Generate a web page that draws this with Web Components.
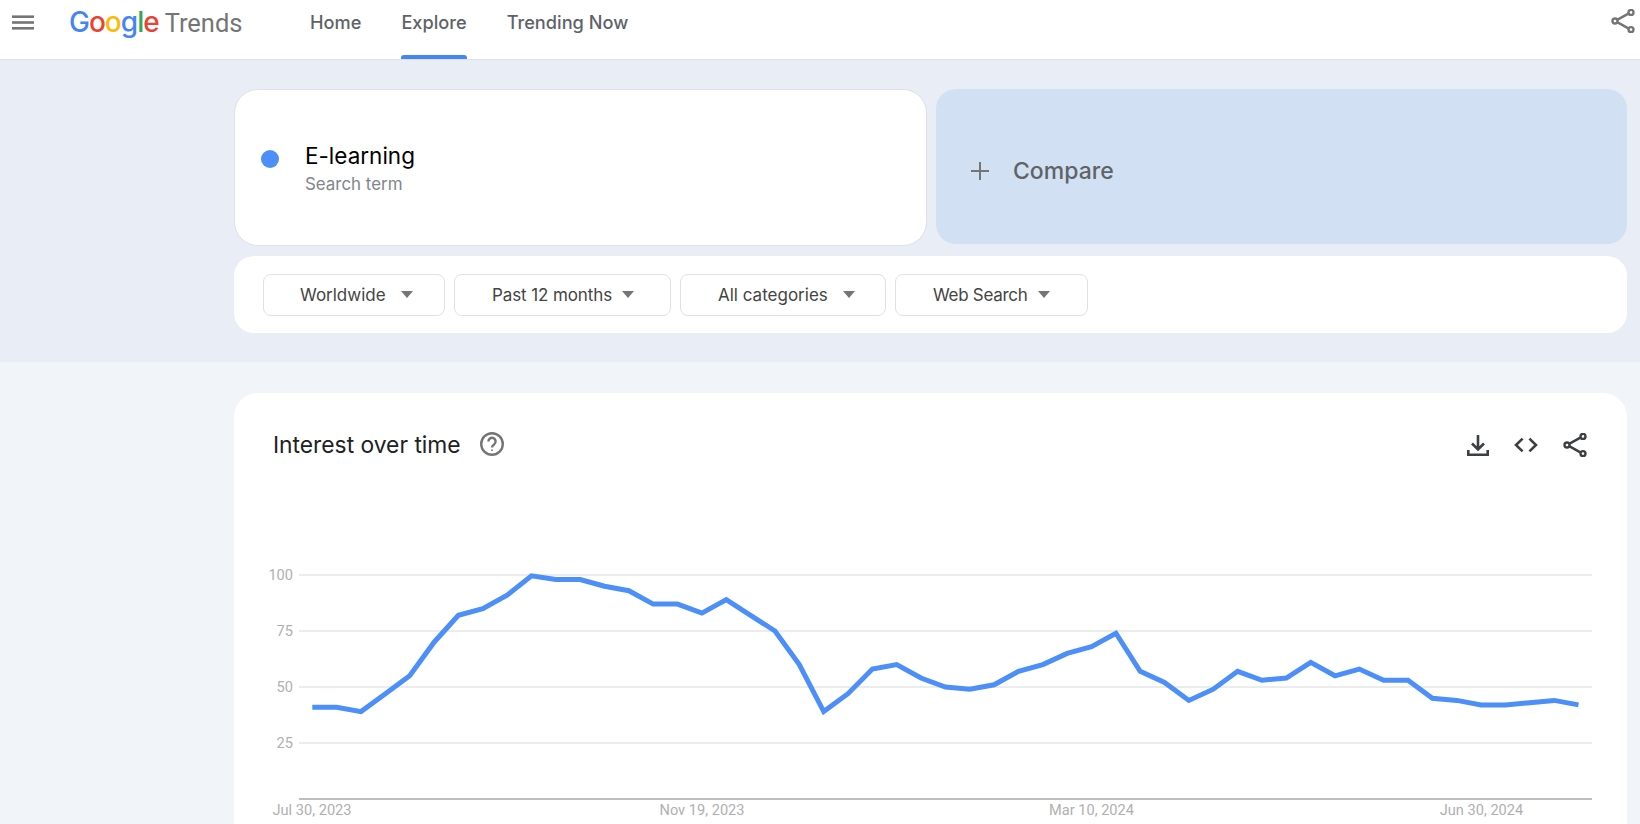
<!DOCTYPE html>
<html lang="en">
<head>
<meta charset="utf-8">
<title>Google Trends</title>
<style>
    html, body {
        margin: 0;
        height: 824px;
        overflow: hidden;
        background: #f1f4f9;
        font-family: Inter, "Liberation Sans", sans-serif;
    }
</style>
</head>
<body>
<trends-header></trends-header>
<explore-panel>
    <search-term slot="term" name="E-learning" kind="Search term"></search-term>
    <compare-box slot="compare"></compare-box>
    <filter-button slot="filters" style="width:182px;--pad:36px;--gap:15px">Worldwide</filter-button>
    <filter-button slot="filters" style="width:217px;--pad:37px;--gap:10px;letter-spacing:-0.1px">Past 12 months</filter-button>
    <filter-button slot="filters" style="width:206px;--pad:37px;--gap:15px">All categories</filter-button>
    <filter-button slot="filters" style="width:193px;--pad:37px;--gap:11px;letter-spacing:-0.3px">Web Search</filter-button>
</explore-panel>
<interest-card heading="Interest over time"></interest-card>

<script>
const shareIcon = (size, color, stroke) => `
<svg width="${size}" height="${size}" viewBox="0 0 24 24" fill="none" stroke="${color}" stroke-width="${stroke}">
    <path d="M6.6 10.6 17.4 4.6M6.6 13.4 17.4 19.4"/>
    <circle cx="4" cy="12" r="2.5"/>
    <circle cx="20" cy="3.4" r="2.5"/>
    <circle cx="20" cy="20.6" r="2.5"/>
</svg>`;

const headerTpl = document.createElement('template');
headerTpl.innerHTML = `
<style>
    :host {
        display: flex;
        align-items: flex-start;
        box-sizing: border-box;
        height: 60px;
        background: #fff;
        border-bottom: 1px solid #dfe1e5;
        position: relative;
    }

    .menu {
        display: block;
        margin: 15px 0 0 12px;
    }

    .logo {
        margin: 2px 0 0 35px;
        width: 241px;
        display: flex;
        align-items: baseline;
        height: 40px;
        line-height: 40px;
        white-space: nowrap;
    }

    .google {
        font: 500 28px/40px Inter, sans-serif;
        letter-spacing: -1px;
    }

    .b { color: #4285f4; }
    .r { color: #ea4335; }
    .y { color: #fbbc05; }
    .g { color: #34a853; }

    .trends {
        font: 400 25.5px/40px Roboto, sans-serif;
        color: #757575;
        margin-left: 6px;
    }

    nav {
        display: flex;
        gap: 40px;
        height: 59px;
    }

    nav a {
        display: block;
        position: relative;
        height: 59px;
        line-height: 44px;
        font-size: 18.2px;
        font-weight: 500;
        color: #5f6368;
    }

    nav a.on::after {
        content: '';
        position: absolute;
        left: 0;
        right: 0;
        bottom: 0;
        height: 4px;
        background: #4285f4;
        border-radius: 3px 3px 0 0;
    }

    .share {
        margin: 9px 5px 0 auto;
    }
</style>

<svg class="menu" width="22" height="15" viewBox="0 0 22 15" fill="#757575">
    <rect width="22" height="2.6" y="0.4"/>
    <rect width="22" height="2.6" y="6.2"/>
    <rect width="22" height="2.6" y="12"/>
</svg>
<div class="logo">
    <span class="google"><span class="b">G</span><span class="r">o</span><span class="y">o</span><span class="b">g</span><span class="g">l</span><span class="r">e</span></span>
    <span class="trends">Trends</span>
</div>
<nav>
    <a>Home</a>
    <a class="on">Explore</a>
    <a>Trending Now</a>
</nav>
<div class="share">${shareIcon(24, '#757575', 2.4)}</div>
`;

class TrendsHeaderElement extends HTMLElement {
    constructor() {
        super();
        this.attachShadow({ mode: 'open' });
        this.shadowRoot.append(headerTpl.content.cloneNode(true));
    }
}

const panelTpl = document.createElement('template');
panelTpl.innerHTML = `
<style>
    :host {
        display: block;
        box-sizing: border-box;
        height: 302px;
        padding: 29px 13px 0 234px;
        background: #e8edf6;
    }

    .search {
        display: grid;
        grid-template-columns: 693px 691px;
        gap: 9px;
        height: 156px;
    }

    .filters {
        display: flex;
        gap: 9px;
        box-sizing: border-box;
        height: 77px;
        margin-top: 11px;
        padding: 18px 0 0 29px;
        background: #fff;
        border-radius: 20px;
    }
</style>

<div class="search">
    <slot name="term"></slot>
    <slot name="compare"></slot>
</div>
<div class="filters">
    <slot name="filters"></slot>
</div>
`;

class ExplorePanelElement extends HTMLElement {
    constructor() {
        super();
        this.attachShadow({ mode: 'open' });
        this.shadowRoot.append(panelTpl.content.cloneNode(true));
    }
}

const termTpl = document.createElement('template');
termTpl.innerHTML = `
<style>
    :host {
        display: flex;
        align-items: center;
        box-sizing: border-box;
        height: 157px;
        background: #fff;
        border: 1px solid #dfe1e5;
        border-radius: 24px;
        padding: 0 0 0 26px;
    }

    .dot {
        width: 18px;
        height: 18px;
        border-radius: 50%;
        background: #4d8ff8;
        margin: 0 26px 18px 0;
    }

    .name {
        font-size: 22.5px;
        line-height: 30px;
        color: #000;
    }

    .kind {
        font-size: 16.9px;
        line-height: 22px;
        margin-top: 2px;
        color: #80868b;
    }
</style>

<div class="dot"></div>
<div>
    <div class="name" id="name"></div>
    <div class="kind" id="kind"></div>
</div>
`;

class SearchTermElement extends HTMLElement {
    constructor() {
        super();
        this.attachShadow({ mode: 'open' });
        this.shadowRoot.append(termTpl.content.cloneNode(true));

        this.shadowRoot.getElementById('name').textContent = this.getAttribute('name');
        this.shadowRoot.getElementById('kind').textContent = this.getAttribute('kind');
    }
}

const compareTpl = document.createElement('template');
compareTpl.innerHTML = `
<style>
    :host {
        display: flex;
        align-items: center;
        height: 155px;
        box-sizing: border-box;
        padding: 8px 0 0 35px;
        background: #d2e0f3;
        border-radius: 20px;
        color: #5f6368;
        font-size: 23px;
        font-weight: 500;
    }

    svg {
        margin-right: 24px;
    }
</style>

<svg width="18" height="18" viewBox="0 0 18 18" stroke="#757575" stroke-width="2">
    <path d="M0 9h18M9 0v18"/>
</svg>
<span>Compare</span>
`;

class CompareBoxElement extends HTMLElement {
    constructor() {
        super();
        this.attachShadow({ mode: 'open' });
        this.shadowRoot.append(compareTpl.content.cloneNode(true));
    }
}

const filterTpl = document.createElement('template');
filterTpl.innerHTML = `
<style>
    :host {
        display: flex;
        align-items: center;
        box-sizing: border-box;
        height: 42px;
        padding-left: var(--pad);
        background: #fff;
        border: 1px solid #dfe1e5;
        border-radius: 8px;
        color: #444;
        font-size: 17px;
        gap: var(--gap);
    }

    .caret {
        width: 0;
        height: 0;
        margin-top: -2px;
        border-left: 6px solid transparent;
        border-right: 6px solid transparent;
        border-top: 7px solid #757575;
    }
</style>

<slot></slot>
<span class="caret"></span>
`;

class FilterButtonElement extends HTMLElement {
    constructor() {
        super();
        this.attachShadow({ mode: 'open' });
        this.shadowRoot.append(filterTpl.content.cloneNode(true));
    }
}

const cardTpl = document.createElement('template');
cardTpl.innerHTML = `
<style>
    :host {
        display: block;
        box-sizing: border-box;
        height: 440px;
        margin: 31px 13px 0 234px;
        background: #fff;
        border-radius: 24px 24px 0 0;
        overflow: hidden;
    }

    .head {
        display: flex;
        align-items: center;
        height: 28px;
        padding: 38px 40px 0 39px;
    }

    h2 {
        margin: -2px 0 0;
        font-size: 22.8px;
        font-weight: 400;
        color: #202124;
    }

    .help {
        margin-left: 19px;
        margin-bottom: 2px;
    }

    .tools {
        display: flex;
        align-items: center;
        gap: 25px;
        margin-left: auto;
    }

    svg {
        display: block;
    }

    text {
        font: 14.6px Roboto, sans-serif;
        fill: #b0b0b0;
    }
</style>

<div class="head">
    <h2 id="title"></h2>
    <svg class="help" width="24" height="24" viewBox="0 0 24 24" fill="none" stroke="#757575" stroke-width="2.4">
        <circle cx="12" cy="12" r="10.8"/>
        <path d="M8.4 9.4a3.6 3.6 0 1 1 5.9 2.8c-1.3 1-2.3 1.6-2.3 3.3"/>
        <circle cx="12" cy="18.2" r="0.5" fill="#757575" stroke-width="1"/>
    </svg>
    <div class="tools">
        <svg width="22" height="24" viewBox="0 0 22 24" fill="none" stroke="#3c4043" stroke-width="2.6">
            <path d="M11 2v14M5 10.5l6 6 6-6M1.3 17v4.7h19.4V17"/>
        </svg>
        <svg width="24" height="24" viewBox="0 0 24 24" fill="none" stroke="#3c4043" stroke-width="2.6">
            <path d="M8.6 5.6 2 12l6.6 6.4M15.4 5.6 22 12l-6.6 6.4"/>
        </svg>
        ${shareIcon(24, '#3c4043', 2.4)}
    </div>
</div>
<svg id="chart" width="1393" height="284" viewBox="234 540 1393 284" style="margin-top:81px"></svg>
`;

class InterestCardElement extends HTMLElement {
    constructor() {
        super();
        this.attachShadow({ mode: 'open' });
        this.shadowRoot.append(cardTpl.content.cloneNode(true));

        this.shadowRoot.getElementById('title').textContent = this.getAttribute('heading');

        const values = [41, 41, 39, 47, 55, 70, 82, 85, 91, 99.6, 98, 98, 95, 93, 87, 87, 83, 89,
            82, 75, 60, 39, 47, 58, 60, 54, 50, 49, 51, 57, 60, 65, 68, 74, 57, 52,
            44, 49, 57, 53, 54, 61, 55, 58, 53, 53, 45, 44, 42, 42, 43, 44, 42];
        const toY = v => 799 - v * 2.24;
        const toX = i => 312.3 + i * 24.35;

        let svg = '';
        for (const v of [100, 75, 50, 25]) {
            const y = Math.round(toY(v));
            svg += `<line x1="299" x2="1592" y1="${y}" y2="${y}" stroke="#e6e6e6" stroke-width="1.6"/>`;
            svg += `<text x="293" y="${y + 5}" text-anchor="end">${v}</text>`;
        }
        svg += `<line x1="299" x2="1592" y1="799" y2="799" stroke="#bdbdbd" stroke-width="2"/>`;

        const points = values.map((v, i) => `${toX(i).toFixed(1)},${toY(v).toFixed(1)}`).join(' ');
        svg += `<polyline points="${points}" fill="none" stroke="#4d8ff8" stroke-width="5" stroke-linejoin="miter"/>`;

        const dates = [['Jul 30, 2023', 312], ['Nov 19, 2023', 702], ['Mar 10, 2024', 1091.5], ['Jun 30, 2024', 1481.5]];
        for (const [label, x] of dates) {
            svg += `<text x="${x}" y="815" text-anchor="middle">${label}</text>`;
        }
        this.shadowRoot.getElementById('chart').innerHTML = svg;
    }
}

customElements.define('trends-header', TrendsHeaderElement);
customElements.define('explore-panel', ExplorePanelElement);
customElements.define('search-term', SearchTermElement);
customElements.define('compare-box', CompareBoxElement);
customElements.define('filter-button', FilterButtonElement);
customElements.define('interest-card', InterestCardElement);
</script>
</body>
</html>
